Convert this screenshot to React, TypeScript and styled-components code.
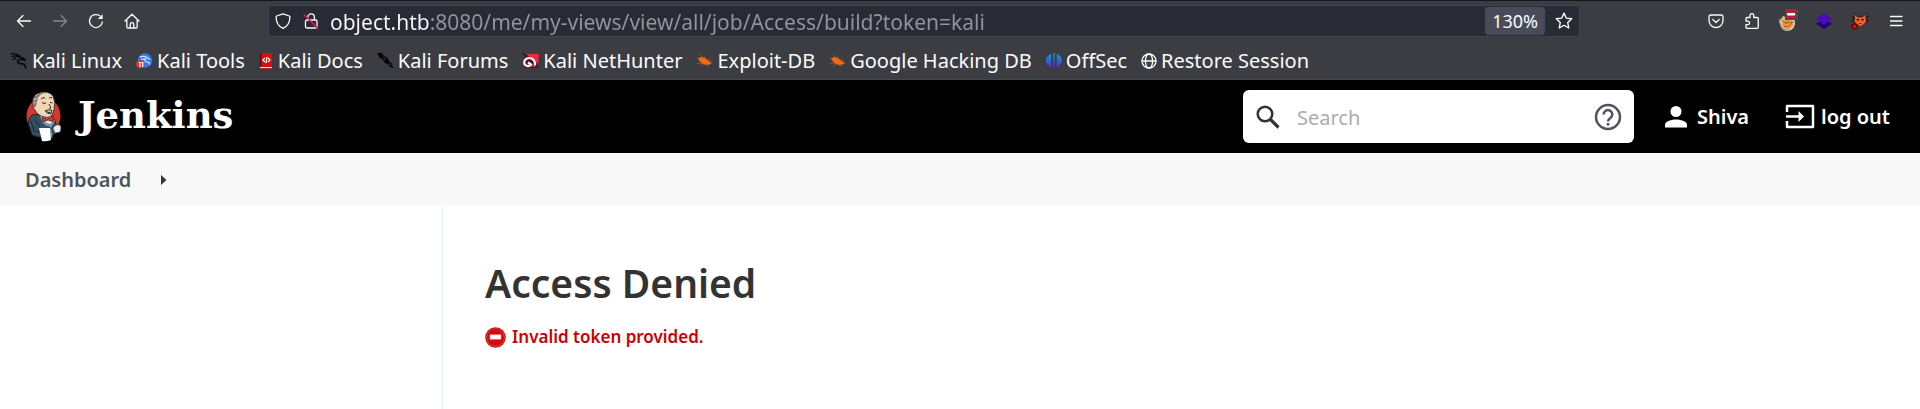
import React from "react";
import styled, { createGlobalStyle } from "styled-components";

const GlobalStyle = createGlobalStyle`
  *, *::before, *::after { box-sizing: border-box; }
  body { margin: 0; background: #fff; font-family: "Noto Sans", sans-serif; }
  button, input { font: inherit; }
  svg { display: block; flex: none; }
`;

const Page = styled.div`
  display: flex;
  flex-direction: column;
  min-height: 100vh;
`;

const Chrome = styled.div`
  background: #3c3d42;
  border-top: 1px solid #16161f;
  border-bottom: 1px solid #46474d;
  color: #fbfbfe;
`;

const Toolbar = styled.div`
  display: flex;
  align-items: center;
  height: 40px;
  padding: 0 6px;
`;

const NavGroup = styled.div`
  display: flex;
  flex: none;
`;

const ToolButton = styled.button`
  display: grid;
  place-items: center;
  width: 36px;
  height: 36px;
  padding: 0;
  border: 0;
  background: none;
  color: inherit;
  &:disabled { color: #85868b; }
`;

const UrlBar = styled.div`
  display: flex;
  align-items: center;
  flex: 1;
  min-width: 0;
  height: 32px;
  margin: 0 118px;
  padding: 0 6px 0 5px;
  gap: 10px;
  background: #282a36;
  border: 1px solid #41444d;
  border-radius: 4px;
`;

const UrlIcon = styled.span`
  display: grid;
  place-items: center;
  width: 18px;
`;

const UrlInput = styled.input`
  flex: 1;
  min-width: 0;
  height: 30px;
  padding: 2px 0 0;
  border: 0;
  outline: 0;
  font-size: 21px;
  color: #9697a0;
  background: linear-gradient(to right, #fbfbfe 101px, #949499 101px);
  background-clip: text;
  -webkit-text-fill-color: transparent;
`;

const ZoomBadge = styled.button`
  height: 28px;
  padding: 0 7px;
  border: 0;
  border-radius: 4px;
  background: #494c58;
  color: #fbfbfe;
  font-size: 18px;
  line-height: 28px;
`;

const StarButton = styled.button`
  padding: 0;
  border: 0;
  background: none;
  color: inherit;
`;

const Bookmarks = styled.nav`
  display: flex;
  align-items: center;
  gap: 14px;
  height: 38px;
  padding: 1px 0 0 10px;
`;

const Bookmark = styled.a`
  display: flex;
  align-items: center;
  gap: 4px;
  color: inherit;
  font-size: 20px;
  line-height: 28px;
  text-decoration: none;
  white-space: nowrap;
`;

const Header = styled.header`
  display: flex;
  align-items: center;
  height: 73px;
  padding: 0 30px 0 26px;
  background: #000;
  color: #fff;
`;

const Brand = styled.a`
  display: flex;
  align-items: center;
  gap: 16px;
  margin-right: auto;
  color: inherit;
  text-decoration: none;
`;

const BrandName = styled.span`
  padding-bottom: 4px;
  font: bold 37px/44px "DejaVu Serif", serif;
`;

const SearchBox = styled.form`
  display: flex;
  align-items: center;
  gap: 16px;
  width: 391px;
  height: 53px;
  margin-right: 31px;
  padding: 0 12px;
  border-radius: 6px;
  background: #fff;
  color: #333;
`;

const SearchInput = styled.input`
  flex: 1;
  min-width: 0;
  padding: 2px 0 0;
  border: 0;
  outline: 0;
  color: #333;
  font-size: 20px;
  line-height: 28px;
  &::placeholder { color: #a9abb1; }
`;

const IconLink = styled.a`
  color: #4d545d;
`;

const HeaderLink = styled.a<{ $gap: number }>`
  display: flex;
  align-items: center;
  gap: ${(p) => p.$gap}px;
  color: inherit;
  font-size: 20px;
  line-height: 28px;
  font-weight: 600;
  text-decoration: none;
  & + & { margin-left: 36px; }
`;

const Breadcrumbs = styled.nav`
  display: flex;
  align-items: center;
  gap: 30px;
  height: 52px;
  padding: 2px 26px 0 25px;
  background: #f8f8f8;
  color: #333;
`;

const Crumb = styled.a`
  color: #4d545d;
  font-size: 20px;
  line-height: 28px;
  font-weight: 600;
  text-decoration: none;
`;

const Body = styled.div`
  display: flex;
  flex: 1;
`;

const SidePanel = styled.aside`
  width: 443px;
  flex: none;
  border-right: 1px solid #e9eef2;
`;

const Main = styled.main`
  flex: 1;
  padding: 51px 42px;
`;

const Title = styled.h1`
  margin: 0;
  color: #333;
  font-size: 39px;
  line-height: 54px;
  font-weight: 600;
`;

const ErrorLine = styled.p`
  display: flex;
  align-items: center;
  gap: 6px;
  margin: 14px 0 0;
  color: #c00;
  font-size: 17px;
  line-height: 26px;
  font-weight: 600;
`;

type LineIconProps = { size?: number; width?: number; children: React.ReactNode };

const LineIcon = ({ size = 16, width = 1.3, children }: LineIconProps) => (
  <svg width={size} height={size} viewBox="0 0 16 16" fill="none" stroke="currentColor"
    strokeWidth={width} strokeLinecap="round" strokeLinejoin="round" aria-hidden="true">
    {children}
  </svg>
);

const BackIcon = () => <LineIcon><path d="M14.5 8H1.5M7 2.5 1.500 8 7 13.500" /></LineIcon>;
const ForwardIcon = () => <LineIcon><path d="M1.500 8h13M9 2.500 14.500 8 9 13.500" /></LineIcon>;
const ReloadIcon = () => (
  <LineIcon>
    <path d="M14.400 9A6.500 6.500 0 1 1 11.800 2.800" />
    <path d="M14.600 1.200v4.800H9.800z" fill="currentColor" stroke="none" />
  </LineIcon>
);
const HomeIcon = () => (
  <LineIcon>
    <path d="M1 8 8 1.200 15 8M2.800 7v7q0 1 1 1h8.400q1 0 1-1V7M6.200 15v-3.500a1.800 1.800 0 0 1 3.600 0V15" />
  </LineIcon>
);
const ShieldIcon = () => (
  <LineIcon>
    <path d="M8 .800 14.300 3q.600.200.600.900C14.900 9.500 12 13.500 8 15.300 4 13.500 1.100 9.500 1.100 3.900q0-.700.600-.900z" />
  </LineIcon>
);
const LockIcon = () => (
  <LineIcon>
    <path d="M4.800 7V4.200a3.300 3.300 0 0 1 6.600 0V7M2.500 8.500q0-1.500 1.500-1.500h8.500q1.500 0 1.500 1.500v5q0 1.500-1.500 1.500H4q-1.500 0-1.500-1.500z" />
    <path d="M1.500 2 14.800 15.200" stroke="#e3174e" strokeWidth="1.600" />
  </LineIcon>
);
const StarIcon = () => (
  <LineIcon size={18} width={1.2}>
    <path d="m8 1 2 4.400 4.900.600-3.600 3.300.900 4.900L8 11.800l-4.200 2.400.900-4.900L1.100 6 6 5.400z" />
  </LineIcon>
);
const PocketIcon = () => (
  <LineIcon>
    <path d="M2.800 2h10.400q1.800 0 1.800 1.800V7.500a7 7 0 0 1-14 0V3.800Q1 2 2.800 2zM4.800 6.500 8 9.500l3.200-3" />
  </LineIcon>
);
const PuzzleIcon = () => (
  <LineIcon>
    <path d="M2 5.500q0-1 1-1h3V2.500a1.900 1.900 0 0 1 3.800 0v2H13q1.300 0 1.300 1.300V14q0 1.300-1.300 1.300H3.300Q2 15.300 2 14v-2.300h1.800a1.700 1.700 0 0 0 0-3.500H2z" />
  </LineIcon>
);
const MenuIcon = () => (
  <LineIcon><path d="M2.500 3.500h11.500M2.500 8h11.500M2.500 12.500h11.500" /></LineIcon>
);

const CookieIcon = () => (
  <svg width="20" height="24" viewBox="0 0 20 24" aria-hidden="true">
    <path d="M1 11 3 10l13 0 1 3a8 8 0 0 1-7 9q-6 0-8-6z" fill="#d9d3c8" />
    <path d="m3 10 2-3 3 1-1 3z" fill="#f1b06a" />
    <ellipse cx="9.500" cy="15" rx="5.800" ry="5" fill="#f39a35" />
    <path d="m3 11 5 3 8-1M6 17l4 1 4-4M7 15l3-3" fill="none" stroke="#a85d1e" />
    <path d="M1.500 10.500q0 8 6.500 10.500h4" fill="none" stroke="#8d8580" />
    <path d="M7 0h13v11H7z" fill="#4c4c50" />
    <circle cx="13" cy="5" r="5" fill="#c9142f" />
    <path d="M9 4h8v2.500H9z" fill="#fff" />
  </svg>
);
const CubeIcon = () => (
  <svg width="16" height="16" viewBox="0 0 16 16" aria-hidden="true">
    <path d="m0 10.500 8-4 8 4-8 5.500z" fill="#210078" />
    <path d="m0 6 8-6 8 6-8 6z" fill="#4a0bb0" />
  </svg>
);
const FoxIcon = () => (
  <svg width="18" height="18" viewBox="0 0 18 18" aria-hidden="true">
    <path d="m1 4 2 3-2 2 2 1M17 4l-2 3 2 2-2 1" fill="none" stroke="#1b1010" />
    <path d="M3.500 1.500V6L3 9.500l3 3L9.500 15l3.500-2.500 2.500-3L15 6V1.500L11.500 5h-5z" fill="#f0602c" stroke="#1b1010" strokeWidth=".7" />
    <path d="M5.500 7h2.500v1.500H6zM10.500 7H13l-.500 1.500h-2zM8 11h2.500l-1.200 1.200z" fill="#241010" />
    <circle cx="3.500" cy="14.500" r="2.600" fill="#e90303" stroke="#300" />
  </svg>
);

const DragonIcon = () => (
  <svg width="18" height="18" viewBox="0 0 18 18" fill="none" stroke="#08080a" strokeLinecap="round" aria-hidden="true">
    <path d="M1 1.800q5-.800 9 2.500M2 4.500q4-1.500 7 .500M3 7.500l3-1.800" strokeWidth="1.300" />
    <path d="M7 4q2 .200 4 1.500l2 .500 2.500 2.200-3-.700-3 0q-2 .500-1.800 2.200.500 2 3.800 2 3.300.200 4.300 4.300" strokeWidth="1.700" />
  </svg>
);
const ToolsIcon = () => (
  <svg width="17" height="16" viewBox="0 0 17 16" aria-hidden="true">
    <circle cx="9" cy="7.500" r="7.200" fill="#2b7cf3" />
    <path d="M3.500 4q5-1.500 8 .700l2.500 2M5 6.500q3-1 5.500-.500-2 .500-1.500 2 .500 1 2.500 1.200t2.500 2.500" fill="none" stroke="#c9e2ff" strokeWidth="1.200" />
    <circle cx="4.300" cy="11.300" r="4.200" fill="#ec2c35" />
    <path d="M2.500 9.500H4V14M5.300 9.500h1.500V14" fill="none" stroke="#fff" strokeWidth="1.200" />
  </svg>
);
const DocsIcon = () => (
  <svg width="15" height="16" viewBox="0 0 15 16" aria-hidden="true">
    <path d="M1 0h12v16H1z" fill="#d80e12" />
    <path d="M1 0h1.200v14H1z" fill="#52080b" />
    <path d="M1 14h12v1.500H1z" fill="#e7dcdc" />
    <path d="M1 15.200h12v.800H1z" fill="#9c1519" />
    <path d="m6 5-2.200 2L6 9M9 5l2 2-2 2M8 4 7 10" fill="none" stroke="#fff" strokeWidth="1.200" />
  </svg>
);
const ForumsIcon = () => (
  <svg width="17" height="17" viewBox="0 0 17 17" aria-hidden="true">
    <path d="m0 1 3.500 0L4 0l3 4 4 2.500L12.500 10l2 1 .500 2.500 2 2.800L12.700 15l-2-3-3-1-1.500-3L2.500 5.500z" fill="#050506" />
    <path d="m6 5.500 3 2M12 11.500l2 2" stroke="#77777d" strokeWidth=".6" />
  </svg>
);
const NetHunterIcon = () => (
  <svg width="17" height="16" viewBox="0 0 17 16" aria-hidden="true">
    <path d="M3 1h13v14H2z" fill="#55131f" />
    <path d="M4 1h13l-1 10z" fill="#f5273d" />
    <path d="m6 13 5-2 3 3H5z" fill="#d31b32" />
    <path d="M13 12.500Q13.500 7.500 9.500 5.500 5.500 4 3 7 1 10.500 4 12.500q3 1.500 5-1L6 9.500" fill="none" stroke="#f5f3f4" strokeWidth="2.200" />
    <path d="m0 .500 4 1.800" stroke="#141416" />
  </svg>
);
const BugIcon = () => (
  <svg width="17" height="16" viewBox="0 0 17 16" aria-hidden="true">
    <path d="M.500 5 5 7M4 1.500 7 5.500M8 3l2 3.500M1 10.500l6-.500M12 14l-2.500-4M14 4.500l-2.500 3M16.500 10.500 12 9.500M4 13.500l4-3M15.500 7.500 12 8.500" stroke="#9a4c22" strokeWidth="1" />
    <path d="M2 5.500 5 4l4 1 3 2.500 2 1.500 1.500 1-1.500 1.500-4 .500-4-1.500-2.500-2.500z" fill="#f26a11" />
  </svg>
);
const OffSecIcon = () => (
  <svg width="16" height="16" viewBox="0 0 16 16" aria-hidden="true">
    <defs>
      <linearGradient id="offsec" gradientUnits="userSpaceOnUse" x1="0" y1="0" x2="0" y2="16">
        <stop offset="0" stopColor="#11a9c4" />
        <stop offset=".5" stopColor="#2f62d6" />
        <stop offset="1" stopColor="#6c12cf" />
      </linearGradient>
    </defs>
    <path d="M5.200 1v13.500Q0 12 0 7.500T5.200 1zM10.800 1v13.500Q16 12 16 7.500T10.800 1zM7.300 0h1.400v16H7.300z" fill="url(#offsec)" />
  </svg>
);
const GlobeIcon = () => (
  <LineIcon>
    <circle cx="8" cy="8" r="7" />
    <ellipse cx="8" cy="8" rx="3.600" ry="7" />
    <path d="M1.200 8h13.600" />
  </LineIcon>
);

const ButlerLogo = () => (
  <svg width="36" height="51" viewBox="0 0 36 51" aria-hidden="true">
    <ellipse cx="17.500" cy="25" rx="17" ry="18.500" fill="#d33833" />
    <path d="M4 38Q0 30 6 24l8-1 9 2 6 4 2 8-2 6-4 3H12l-6-2z" fill="#335061" stroke="#111b22" strokeWidth=".8" />
    <path d="m14 24 3 8 8 4 4-6-4-5z" fill="#e8eaea" />
    <path d="m16 30 4 5 6 0 2-5-4 3z" fill="#6f93a3" />
    <path d="M7 15Q6 5 14 2q8-3 13 3 3 6 1 14l-2 5q-4 4-8 2-7-2-9-7-2-1-2-4z" fill="#f0d6b7" stroke="#1c1715" strokeWidth=".8" />
    <path d="M7 14Q5 5 13 2q5-2 8 0-7 0-9 5l-1 4-1 4-2 2z" fill="#7c7674" />
    <path d="m9 5 3-2M7.500 9l4-2M7.500 12l3-1" stroke="#d8d4ce" strokeWidth=".8" />
    <path d="M15 8q2-2 4-1M23 7q2-1 3 0M16 11.500q2 1.500 4 .500M24 11.500l2.500.300M23 13l2 4-2 1M19 20q3-2 7-.500l-1 3q-3 1-6-2.500" fill="none" stroke="#302521" strokeWidth="1" />
    <path d="m20 20 5 1.500-2 .700z" fill="#302521" />
    <path d="m16 26 5 2 6-3 1 6-6-2-5 2z" fill="#db332d" stroke="#4b100e" strokeWidth=".7" />
    <path d="M13 37h11l1 12q-5 2-9 1z" fill="#fff" />
    <path d="M24.500 38 26 47" stroke="#9faab0" />
    <path d="m27 37 3-3 4 0 1 3-1 4-5 1z" fill="#eceff0" stroke="#51585b" strokeWidth=".7" />
    <path d="m5 30 3 10 5 1M8 27l6 9" fill="none" stroke="#152630" strokeWidth=".9" />
  </svg>
);
const SearchIcon = () => (
  <svg width="26" height="26" viewBox="0 0 26 26" fill="none" stroke="currentColor" aria-hidden="true">
    <circle cx="10" cy="10" r="7.300" strokeWidth="2.500" />
    <path d="m15.500 15.500 8 8" strokeWidth="3.200" />
  </svg>
);
const HelpIcon = () => (
  <svg width="28" height="28" viewBox="0 0 28 28" fill="none" stroke="currentColor" strokeWidth="2.500" aria-hidden="true">
    <circle cx="14" cy="14" r="12" />
    <path d="M9.700 11.500a4.300 4.300 0 1 1 6.700 3.500Q14 16.500 14 18.500" />
    <path d="M14 20v2.600" />
  </svg>
);
const PersonIcon = () => (
  <svg width="22" height="22" viewBox="0 0 22 22" fill="currentColor" aria-hidden="true">
    <circle cx="11" cy="5.500" r="5.500" />
    <path d="M0 21.500v-2.700C0 15 7 13.500 11 13.500s11 1.500 11 5.300v2.700z" />
  </svg>
);
const LogOutIcon = () => (
  <svg width="30" height="25" viewBox="0 0 30 25" aria-hidden="true">
    <path d="M2 8V2h26v21H2v-6M1 12.500h16" fill="none" stroke="currentColor" strokeWidth="2.500" strokeLinejoin="round" />
    <path d="m13.500 7 5.500 5.500-5.500 5.500z" fill="currentColor" />
  </svg>
);
const CaretIcon = () => (
  <svg width="6" height="10" viewBox="0 0 6 10" aria-hidden="true"><path d="m0 0 5.500 5L0 10z" fill="currentColor" /></svg>
);
const DeniedIcon = () => (
  <svg width="21" height="21" viewBox="0 0 21 21" aria-hidden="true">
    <circle cx="10.500" cy="10.500" r="10.300" fill="#b91414" />
    <circle cx="10.500" cy="10.500" r="9.300" fill="#e04343" />
    <circle cx="10.500" cy="10.500" r="8.500" fill="#d90909" />
    <path d="M5 7.700h11v4.600H5z" fill="#fff" stroke="#e99" strokeWidth=".5" />
  </svg>
);

const bookmarks = [
  { label: "Kali Linux", Icon: DragonIcon },
  { label: "Kali Tools", Icon: ToolsIcon },
  { label: "Kali Docs", Icon: DocsIcon },
  { label: "Kali Forums", Icon: ForumsIcon },
  { label: "Kali NetHunter", Icon: NetHunterIcon },
  { label: "Exploit-DB", Icon: BugIcon },
  { label: "Google Hacking DB", Icon: BugIcon },
  { label: "OffSec", Icon: OffSecIcon },
  { label: "Restore Session", Icon: GlobeIcon },
];

const extensions = [
  { label: "Save to Pocket", Icon: PocketIcon },
  { label: "Extensions", Icon: PuzzleIcon },
  { label: "Cookie editor", Icon: CookieIcon },
  { label: "Wappalyzer", Icon: CubeIcon },
  { label: "FoxyProxy", Icon: FoxIcon },
  { label: "Open application menu", Icon: MenuIcon },
];

export default function App() {
  return (
    <Page>
      <GlobalStyle />
      <Chrome>
        <Toolbar>
          <NavGroup>
            <ToolButton aria-label="Back"><BackIcon /></ToolButton>
            <ToolButton aria-label="Forward" disabled><ForwardIcon /></ToolButton>
            <ToolButton aria-label="Reload"><ReloadIcon /></ToolButton>
            <ToolButton aria-label="Home"><HomeIcon /></ToolButton>
          </NavGroup>
          <UrlBar>
            <UrlIcon><ShieldIcon /></UrlIcon>
            <UrlIcon><LockIcon /></UrlIcon>
            <UrlInput aria-label="Address" defaultValue="object.htb:8080/me/my-views/view/all/job/Access/build?token=kali" />
            <ZoomBadge aria-label="Reset zoom level, 130%">130%</ZoomBadge>
            <StarButton aria-label="Bookmark this page"><StarIcon /></StarButton>
          </UrlBar>
          <NavGroup>
            {extensions.map(({ label, Icon }) => (
              <ToolButton key={label} aria-label={label}><Icon /></ToolButton>
            ))}
          </NavGroup>
        </Toolbar>
        <Bookmarks aria-label="Bookmarks">
          {bookmarks.map(({ label, Icon }) => (
            <Bookmark key={label} href="#"><Icon />{label}</Bookmark>
          ))}
        </Bookmarks>
      </Chrome>
      <Header>
        <Brand href="#"><ButlerLogo /><BrandName>Jenkins</BrandName></Brand>
        <SearchBox role="search">
          <SearchIcon />
          <SearchInput type="text" aria-label="Search" placeholder="Search" />
          <IconLink href="#" aria-label="Search help"><HelpIcon /></IconLink>
        </SearchBox>
        <HeaderLink href="#" $gap={10}><PersonIcon />Shiva</HeaderLink>
        <HeaderLink href="#" $gap={6}><LogOutIcon />log out</HeaderLink>
      </Header>
      <Breadcrumbs aria-label="Breadcrumbs">
        <Crumb href="#">Dashboard</Crumb>
        <CaretIcon />
      </Breadcrumbs>
      <Body>
        <SidePanel />
        <Main>
          <Title>Access Denied</Title>
          <ErrorLine><DeniedIcon />Invalid token provided.</ErrorLine>
        </Main>
      </Body>
    </Page>
  );
}
